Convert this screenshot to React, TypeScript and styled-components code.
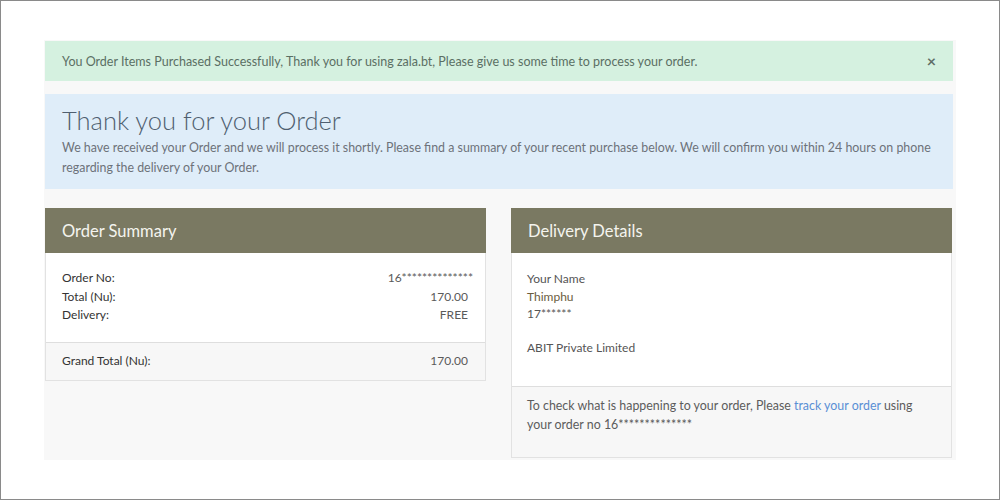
import React from "react";
import styled, { createGlobalStyle } from "styled-components";

const Global = createGlobalStyle`
  html, body { margin: 0; padding: 0; background: #fff; }
  body { font-family: "Lato", "Noto Sans", sans-serif; }
  * { box-sizing: border-box; }
`;

const Frame = styled.div`
  width: 1000px;
  height: 500px;
  border: 1px solid #8a8a8a;
  background: #fff;
  padding: 39px 0 0 43px;
`;

const Container = styled.div`
  width: 912px;
  height: 420px;
  background: #f8f8f8;
  padding: 1px 3px 0 1px;
  display: flex;
  flex-direction: column;
`;

const Alert = styled.div`
  height: 40px;
  background: #d5f1e0;
  display: flex;
  align-items: center;
  justify-content: space-between;
  padding: 0 17px 0 17px;
  color: #5b6f64;
  font-size: 12.5px;
`;

const Close = styled.span`
  font-size: 16px;
  font-weight: 700;
  color: #5f6e66;
  line-height: 1;
`;

const Jumbo = styled.div`
  margin-top: 13px;
  background: #dfedf9;
  padding: 11px 17px 12px 17px;
`;

const Title = styled.h1`
  margin: 0;
  font-weight: 300;
  font-size: 25.5px;
  color: #4f5f70;
  line-height: 30px;
`;

const Lead = styled.p`
  margin: 3px 0 0;
  font-size: 12.4px;
  line-height: 19.5px;
  color: #6d7279;
`;

const Cards = styled.div`
  margin-top: 19px;
  display: grid;
  grid-template-columns: 441px 441px;
  column-gap: 25px;
  align-items: start;
`;

const Card = styled.div`
  background: #fff;
  border: 1px solid #e2e2e2;
  border-top: none;
`;

const CardHead = styled.div`
  height: 45px;
  margin: 0 -1px;
  background: #7a7962;
  color: #f4f4ee;
  font-size: 16.5px;
  display: flex;
  align-items: center;
  padding: 0 17px;
`;

const Body = styled.div<{ $pad: string }>`
  padding: ${(p) => p.$pad};
  font-size: 12px;
`;

const Row = styled.div`
  display: flex;
  justify-content: space-between;
  line-height: 18.5px;
  color: #333;
`;

const Value = styled.span<{ $shift?: number }>`
  color: #5a5a5a;
  margin-right: ${(p) => p.$shift ?? 0}px;
`;

const Footer = styled.div<{ $pad: string }>`
  background: #f7f7f7;
  border-top: 1px solid #dedede;
  padding: ${(p) => p.$pad};
  font-size: 12px;
`;

const Line = styled.div<{ $color?: string; $gap?: number }>`
  line-height: 17.5px;
  color: ${(p) => p.$color ?? "#555"};
  margin-top: ${(p) => p.$gap ?? 0}px;
`;

const Para = styled.p`
  margin: 0;
  line-height: 19px;
  color: #5c5c5c;
  font-size: 12.4px;
`;

const Link = styled.a`
  color: #5a8fd5;
  text-decoration: none;
`;

export default function App() {
  return (
    <>
      <Global />
      <Frame>
        <Container>
          <Alert>
            <span>
              You Order Items Purchased Successfully, Thank you for using zala.bt, Please give us some time to process your order.
            </span>
            <Close>×</Close>
          </Alert>
          <Jumbo>
            <Title>Thank you for your Order</Title>
            <Lead>
              We have received your Order and we will process it shortly. Please find a summary of your recent purchase below. We will confirm you within 24 hours on phone regarding the delivery of your Order.
            </Lead>
          </Jumbo>
          <Cards>
            <Card>
              <CardHead>Order Summary</CardHead>
              <Body $pad="16px 17px 17px 16px">
                <Row>
                  <span>Order No:</span>
                  <Value $shift={-5}>16**************</Value>
                </Row>
                <Row>
                  <span>Total (Nu):</span>
                  <Value>170.00</Value>
                </Row>
                <Row>
                  <span>Delivery:</span>
                  <Value>FREE</Value>
                </Row>
              </Body>
              <Footer $pad="9px 17px 10px 16px">
                <Row>
                  <span>Grand Total (Nu):</span>
                  <Value>170.00</Value>
                </Row>
              </Footer>
            </Card>
            <Card>
              <CardHead>Delivery Details</CardHead>
              <Body $pad="17px 15px 30px 15px">
                <Line>Your Name</Line>
                <Line $color="#6b5c3e">Thimphu</Line>
                <Line>17******</Line>
                <Line $gap={16}>ABIT Private Limited</Line>
              </Body>
              <Footer $pad="9px 15px 23px 15px">
                <Para>
                  To check what is happening to your order, Please <Link href="#">track your order</Link> using your order no 16**************
                </Para>
              </Footer>
            </Card>
          </Cards>
        </Container>
      </Frame>
    </>
  );
}
